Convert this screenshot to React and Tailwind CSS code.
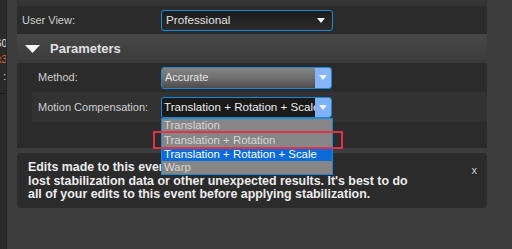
import React from "react";

function Arrow({ className = "" }) {
  return (
    <svg width="8" height="5" viewBox="0 0 8 5" className={className}>
      <path d="M0 0 L8 0 L4 5 Z" fill="#f2f2f2" />
    </svg>
  );
}

export default function App() {
  return (
    <div className="w-[512px] h-[249px] bg-[#3d3d3d] flex overflow-hidden font-['Liberation_Sans',Arial,sans-serif]">
      {/* left clipped strip */}
      <div className="w-[7px] h-full bg-[#2a2a2a] border-r border-[#222] flex flex-col items-end overflow-hidden text-[10px] leading-[13px] pt-[37px] shrink-0">
        <div className="whitespace-nowrap text-[#e6e6e6] mr-[-1px]">1560</div>
        <div className="whitespace-nowrap text-[#e0603a] mt-[3px] mr-[-1px]">1x3</div>
        <div className="whitespace-nowrap text-[#e6e6e6] mt-[4px]">:</div>
        <div className="w-full h-[1px] bg-[#1c1c1c] mt-[10px]"></div>
      </div>
      <div className="w-[10px] shrink-0"></div>

      {/* main panel */}
      <div className="w-[470px] shrink-0 flex flex-col">
        <div className="h-[6px] bg-[#353535]"></div>
        {/* user view row */}
        <div className="h-[28px] bg-[#2b2b2b] flex items-center pl-[5px]">
          <div className="w-[139px] text-[11px] text-[#cfcfcf]">User View:</div>
          <div className="w-[172px] h-[21px] rounded-[3px] border border-[#1b8ad6] bg-gradient-to-b from-[#1c1c1c] to-[#2c2c2c] flex items-center justify-between pl-[4px] pr-[7px]">
            <span className="text-[11.7px] text-[#e2e2e2]">Professional</span>
            <Arrow />
          </div>
        </div>
        {/* parameters header */}
        <div className="h-[29px] bg-gradient-to-b from-[#474747] to-[#3b3b3b] flex items-center pl-[8px]">
          <svg width="15" height="8" viewBox="0 0 15 8" className="mr-[10px]">
            <path d="M0 0 L15 0 L7.5 8 Z" fill="#f4f4f4" />
          </svg>
          <span className="text-[13px] font-bold text-[#e0e0e0]">Parameters</span>
        </div>
        {/* parameters content */}
        <div className="h-[85px] bg-[#2b2b2b] pl-[15px] flex flex-col">
          <div className="h-[29px] bg-[#2b2b2b] flex items-center pl-[6px]">
            <div className="w-[123px] text-[11px] text-[#cfcfcf]">Method:</div>
            <div className="w-[171px] h-[22px] rounded-[3px] border border-[#1b8ad6] flex overflow-hidden">
              <div className="flex-1 bg-gradient-to-b from-[#858585] via-[#6e6e6e] to-[#4c4c4c] flex items-center pl-[3px]">
                <span className="text-[11px] text-[#e4e4e4]">Accurate</span>
              </div>
              <div className="w-[16px] bg-[#86b6f6] flex items-center justify-center">
                <Arrow />
              </div>
            </div>
          </div>
          <div className="h-[30px] bg-[#323232] flex items-center pl-[6px]">
            <div className="w-[123px] text-[11px] text-[#cfcfcf]">Motion Compensation:</div>
            <div className="relative w-[171px] h-[21px]">
              <div className="w-full h-full rounded-[3px] border border-[#1b8ad6] flex overflow-hidden bg-[#1a1a1a]">
                <div className="flex-1 min-w-0 flex items-center pl-[2px] overflow-hidden">
                  <span className="text-[11.6px] text-[#ececec] whitespace-nowrap">Translation + Rotation + Scale</span>
                </div>
                <div className="w-[16px] bg-[#80b2fb] flex items-center justify-center shrink-0">
                  <Arrow />
                </div>
              </div>
              {/* dropdown list */}
              <div className="absolute left-0 top-[21px] w-[172px] border border-[#1b8ad6] bg-[#868686] z-10 flex flex-col text-[11.4px]">
                <div className="h-[13px] leading-[13px] pl-[2px] text-[#d6d6d6]">Translation</div>
                <div className="h-[16px] leading-[16px] pl-[2px] text-[#d6d6d6]">Translation + Rotation</div>
                <div className="h-[13px] leading-[13px] pl-[2px] bg-[#0b6bd8] text-white">Translation + Rotation + Scale</div>
                <div className="h-[13px] leading-[13px] pl-[2px] text-[#d6d6d6]">Warp</div>
              </div>
              {/* red highlight */}
              <div className="absolute left-[-8px] top-[34px] w-[190px] h-[18px] border-2 border-[#e0324c] z-20"></div>
            </div>
          </div>
        </div>
        <div className="h-[5px]"></div>
        {/* warning */}
        <div className="h-[55px] rounded-[3px] bg-[#2b2b2b] flex pl-[11px] pt-[8px] pr-[10px]">
          <p className="flex-1 text-[12.4px] leading-[13.5px] font-bold text-[#ececec]">
            Edits made to this event that could result in<br />
            lost stabilization data or other unexpected results. It's best to do<br />
            all of your edits to this event before applying stabilization.
          </p>
          <span className="text-[11px] text-[#cfcfcf] mt-[1px]">x</span>
        </div>
      </div>
    </div>
  );
}
